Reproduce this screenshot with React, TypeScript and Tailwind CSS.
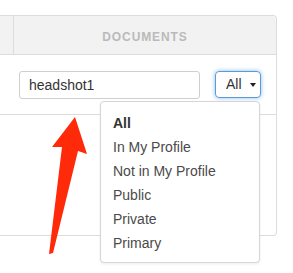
import React from "react";

export default function App() {
  const items = ["All", "In My Profile", "Not in My Profile", "Public", "Private", "Primary"];
  return (
    <div
      className="relative w-[293px] h-[273px] bg-white overflow-hidden"
      style={{ fontFamily: '"Liberation Sans", Arial, sans-serif' }}
    >
      <div className="pt-[15px]">
        <div className="w-[277px] border-t border-r border-b border-[#dcdcdc] rounded-tr-[4px] rounded-br-[4px]">
          <div className="flex h-[39px] bg-[#f2f2f2] border-b border-[#dcdcdc] rounded-tr-[4px]">
            <div className="w-[14px] border-r border-[#dcdcdc]" />
            <div className="flex-1 flex items-center justify-center pt-[3px] text-[12px] font-bold tracking-[0.9px] text-[#bababa]">
              DOCUMENTS
            </div>
          </div>
          <div className="h-[60px] border-b border-[#dcdcdc] flex items-start pt-[16px] pl-[19px]">
            <div className="w-[181px] h-[28px] border border-[#cfcfcf] rounded-[3px] flex items-center pl-[9px] text-[14px] text-[#333]">
              headshot1
            </div>
            <div className="ml-[15px] w-[46px] h-[27px] border border-[#5a9ad6] rounded-[4px] shadow-[0_0_4px_rgba(90,160,230,0.7)] flex items-center pl-[10px] text-[14px] text-[#333]">
              <span>All</span>
              <span className="ml-[8px] w-0 h-0 border-l-[3.5px] border-r-[3.5px] border-t-[4px] border-l-transparent border-r-transparent border-t-[#222]" />
            </div>
          </div>
          <div className="h-[120px]" />
        </div>
      </div>

      <div className="absolute left-[100px] top-[101px] w-[160px] h-[162px] bg-white border border-[#d6d6d6] rounded-[4px] shadow-[0_1px_3px_rgba(0,0,0,0.08)] pt-[9px] pl-[12px]">
        {items.map((it, i) => (
          <div
            key={it}
            className={
              "h-[24px] flex items-center text-[14px] " + (i === 0 ? "font-bold text-[#333]" : "text-[#4a4a4a]")
            }
          >
            {it}
          </div>
        ))}
      </div>

      <svg className="absolute left-0 top-0" width="293" height="273" viewBox="0 0 293 273">
        <polygon
          points="75,117 87,154 78,151 53,253 49,254 62,147 52,147"
          fill="#ff2a0a"
        />
      </svg>
    </div>
  );
}
